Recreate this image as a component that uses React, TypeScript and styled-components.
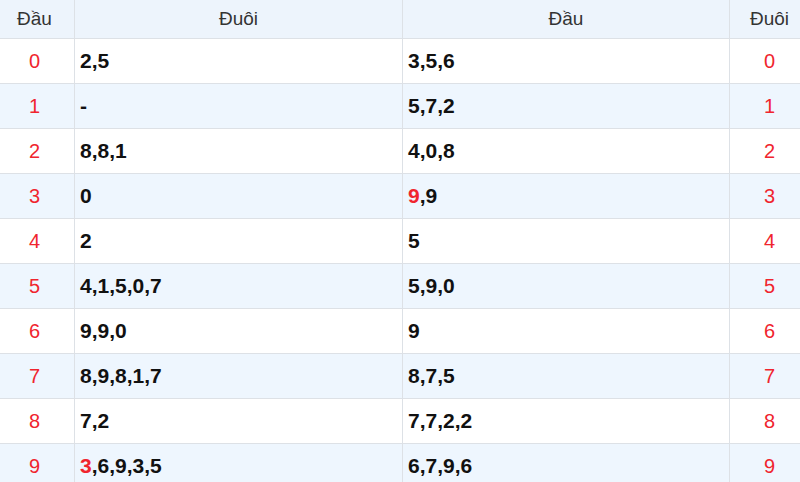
import React from "react";
import styled, { createGlobalStyle } from "styled-components";

const Global = createGlobalStyle`
  html, body { margin: 0; padding: 0; background: #fff; overflow: hidden; }
  body { font-family: "Liberation Sans", Arial, sans-serif; }
`;

const Table = styled.table`
  width: 815px;
  margin: 0 0 0 -6px;
  border-collapse: collapse;
  table-layout: fixed;
  font-family: "Liberation Sans", Arial, sans-serif;
`;

const HeadCell = styled.th`
  height: 38px;
  padding: 0;
  background: #edf4fc;
  border: 1px solid #dde1e6;
  border-top: none;
  color: #333;
  font-size: 19px;
  font-weight: normal;
  text-align: center;
  vertical-align: middle;
`;

const Row = styled.tr<{ $alt: boolean }>`
  background: ${(p) => (p.$alt ? "#eef6fe" : "#ffffff")};
`;

const NumCell = styled.td`
  height: 44px;
  padding: 0;
  border: 1px solid #dde1e6;
  color: #f0252e;
  font-size: 20px;
  text-align: center;
  vertical-align: middle;
`;

const ValCell = styled.td`
  height: 44px;
  padding: 0 5px;
  border: 1px solid #dde1e6;
  color: #111;
  font-size: 21px;
  font-weight: bold;
  text-align: left;
  vertical-align: middle;
`;

const Hot = styled.span`
  color: #f0252e;
`;

type Part = { t: string; hot?: boolean };

const rows: { tail: Part[]; head: Part[] }[] = [
  { tail: [{ t: "2,5" }], head: [{ t: "3,5,6" }] },
  { tail: [{ t: "-" }], head: [{ t: "5,7,2" }] },
  { tail: [{ t: "8,8,1" }], head: [{ t: "4,0,8" }] },
  { tail: [{ t: "0" }], head: [{ t: "9", hot: true }, { t: ",9" }] },
  { tail: [{ t: "2" }], head: [{ t: "5" }] },
  { tail: [{ t: "4,1,5,0,7" }], head: [{ t: "5,9,0" }] },
  { tail: [{ t: "9,9,0" }], head: [{ t: "9" }] },
  { tail: [{ t: "8,9,8,1,7" }], head: [{ t: "8,7,5" }] },
  { tail: [{ t: "7,2" }], head: [{ t: "7,7,2,2" }] },
  { tail: [{ t: "3", hot: true }, { t: ",6,9,3,5" }], head: [{ t: "6,7,9,6" }] },
];

const renderParts = (parts: Part[]) =>
  parts.map((p, i) => (p.hot ? <Hot key={i}>{p.t}</Hot> : <React.Fragment key={i}>{p.t}</React.Fragment>));

export default function App() {
  return (
    <>
      <Global />
      <Table>
        <colgroup>
          <col style={{ width: 80 }} />
          <col style={{ width: 328 }} />
          <col style={{ width: 327 }} />
          <col style={{ width: 80 }} />
        </colgroup>
        <thead>
          <tr>
            <HeadCell>Đầu</HeadCell>
            <HeadCell>Đuôi</HeadCell>
            <HeadCell>Đầu</HeadCell>
            <HeadCell>Đuôi</HeadCell>
          </tr>
        </thead>
        <tbody>
          {rows.map((r, i) => (
            <Row key={i} $alt={i % 2 === 1}>
              <NumCell>{i}</NumCell>
              <ValCell>{renderParts(r.tail)}</ValCell>
              <ValCell>{renderParts(r.head)}</ValCell>
              <NumCell>{i}</NumCell>
            </Row>
          ))}
        </tbody>
      </Table>
    </>
  );
}
